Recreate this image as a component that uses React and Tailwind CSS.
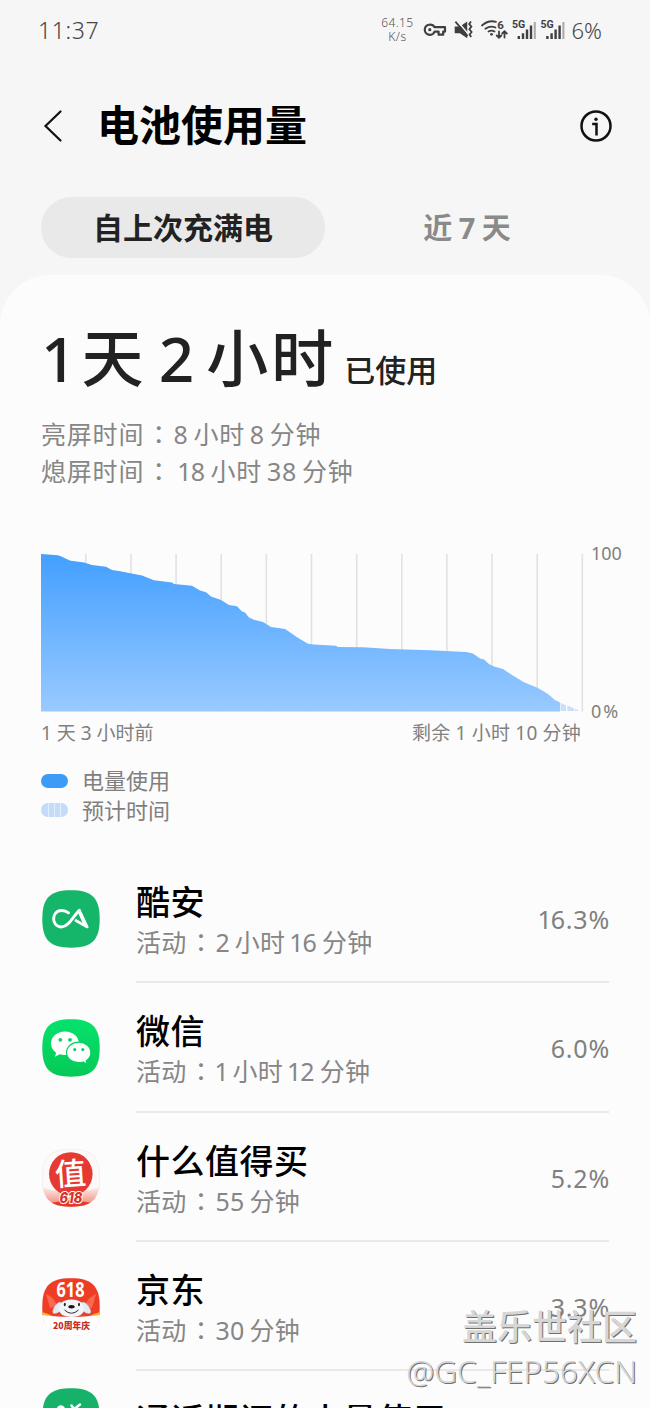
import React from "react";

const GRID_LINES = [85.8, 131, 176.1, 221.2, 266.3, 311.5, 356.7, 401.8, 446.9, 492, 537.2, 582.3];

const USAGE_PATH =
  "M41 554 L58 555.3 C64 557 66 559.5 71 560.7 L84 562.5 L92 565 L106 566.8 L112 570 L120 571.2 L142 575.5 L154 580.3 L172 582.4 L174 584 L192 585.8 L200 590.5 L206 592.3 L211 596.5 L221 600 L229 605 L237 606.3 L242 611.5 L245 612.5 L249 617.5 L254 619.8 L263 622 L271 627 L285 629 L291 633 L297 637.3 L308 643.7 L314 644.6 L336 645.8 L338 647 L363 647.2 L390 648.9 L430 650.3 L466 652 L473 653.5 L480 658.5 L484 659.5 L489 664 L494 666.5 L503 669 L512 675 L524 682.3 L538 688 L548 694 L555 700 L560 702.5 V711.5 H41 Z";

// Narrow "1" and a centred full-width colon inside running text
const Mixed = ({ children }) =>
  children.split(/(1|：)/).map((part, i) => {
    if (part === "1") {
      return <span key={i} className="-ml-px tracking-[-1px]">1</span>;
    }
    if (part === "：") {
      return <span key={i} className="ml-[2px] mr-[1.5px] font-['Noto_Sans_CJK_TC',sans-serif]">：</span>;
    }
    return <span key={i}>{part}</span>;
  });

const Chart = () => (
  <svg width="544" height="160" viewBox="41 552 544 160" className="block">
    <defs>
      <linearGradient id="usage" x1="0" y1="554" x2="0" y2="711" gradientUnits="userSpaceOnUse">
        <stop offset="0" stopColor="#439fff" />
        <stop offset="1" stopColor="#99caff" />
      </linearGradient>
    </defs>
    {GRID_LINES.map((x) => (
      <path key={x} d={`M${x} 554 V711.5`} stroke="#e2e2e2" strokeWidth="1.6" />
    ))}
    <path d={USAGE_PATH} fill="url(#usage)" />
    <path d="M560.5 702.7 L566 705.2 V711 H560.5Z M567.3 705.6 L574 708.4 V711 H567.3Z M575 708.8 L579.5 711 H575Z" fill="#c8e0fb" />
  </svg>
);

const StatusIcons = () => (
  <svg width="145" height="26" viewBox="423 17 145 26" className="block">
    {/* vpn key */}
    <path
      d="M429.8 24.6a5.1 5.1 0 1 0 4.8 7h4v3.1h4.6v-3.1h1.8v-4.4h-10.4a5.1 5.1 0 0 0-4.8-2.6Z"
      fill="none"
      stroke="#3f3f3f"
      strokeWidth="2.2"
      strokeLinejoin="round"
    />
    <circle cx="429.8" cy="29.7" r="1.6" fill="#3f3f3f" />
    {/* muted, vibrate */}
    <path d="M454.7 26.6h5.2l7.3-5v16.6l-7.3-5h-5.2Z" fill="#3f3f3f" />
    <path d="M456.4 20 L469 35" stroke="#f6f6f6" strokeWidth="1.6" />
    <path d="M455.4 21.6 L467.6 36" stroke="#3f3f3f" strokeWidth="1.8" />
    <path d="M471 21.5l-1.8 2.5 2.2 2.6-2 2.6 2.2 2.8-2 2.5 1.6 2.5" fill="none" stroke="#3f3f3f" strokeWidth="1.8" />
    {/* wifi 6 */}
    <g fill="none" stroke="#3f3f3f" strokeWidth="1.8" strokeLinecap="round">
      <path d="M482 25.5q6.5-5.800 14-3.700" />
      <path d="M485.400 28.800q5-3.600 10-1.300" />
      <path d="M488.500 31.600q3.200-2 6 0" />
      <path d="M499 31.500v6.200m-2.300-2.200 2.300 2.300 2.300-2.300M504.500 37.500v-6.200m-2.300 2.200 2.300-2.300 2.300 2.300" />
    </g>
    <circle cx="491.5" cy="34.3" r="1.4" fill="#3f3f3f" />
    <g fill="#3f3f3f" fontFamily="Roboto, sans-serif" fontWeight="700">
      <text x="497.2" y="28.7" fontSize="11.5">6</text>
      <text x="512" y="27.6" fontSize="10.5">5G</text>
      <text x="540.6" y="27.6" fontSize="10.5">5G</text>
    </g>
    {[0, 28.6].map((dx) => (
      <g key={dx} transform={`translate(${dx} 0)`}>
        <path d="M518.800 36v3M523 33.300v5.700M527 29.500v9.500M531 25.500v13.500" stroke="#3f3f3f" strokeWidth="2.400" />
        <path d="M534.800 22v17" stroke="#a9a9a9" strokeWidth="2" />
      </g>
    ))}
  </svg>
);

// Rounded "squircle" used by every launcher icon
const SHAPE = "M29 .3C50 .3 57.700 8 57.700 29S50 57.700 29 57.700 .3 50 .3 29 8 .3 29 .3Z";

const CoolapkIcon = () => (
  <svg width="58" height="58" viewBox="0 0 58 58">
    <path d={SHAPE} fill="#15b56a" />
    <g fill="none" stroke="#fff" strokeLinecap="round" strokeLinejoin="round">
      <path d="M26.500 22.800C24.500 21.200 22 20.500 19.500 20.500c-10.500 0-10.500 16.500 0 16.500C27 37 31 26 37.300 20.300" strokeWidth="2.900" />
      <path d="M37.300 20.300L45.300 37L33.800 30.500" strokeWidth="2.600" />
      <path d="M38 23l4.500 10" strokeWidth="3.400" />
    </g>
  </svg>
);

const WechatIcon = () => (
  <svg width="58" height="58" viewBox="0 0 58 58">
    <defs>
      <linearGradient id="wechat" x1="0" y1="0" x2="0" y2="1">
        <stop offset="0" stopColor="#05e26c" />
        <stop offset="1" stopColor="#06c957" />
      </linearGradient>
    </defs>
    <path d={SHAPE} fill="url(#wechat)" />
    <path d="M23 12.500c-8 0-14 5.400-14 12 0 3.800 2 7 5.100 9.200l-1.200 4 4.800-2.500c1.700.5 3.400.8 5.300.8 8 0 14-5 14-11.500s-6-12-14-12Z" fill="#fff" />
    <path d="M36.800 23.200c-6.900 0-12.300 4.500-12.300 10.300s5.400 10.200 12.300 10.200c1.500 0 3-.2 4.400-.7l4 2.200-1-3.500c2.900-1.900 4.700-4.800 4.700-8.200 0-5.800-5.300-10.300-12.100-10.300Z" fill="#fff" stroke="#05d260" strokeWidth="1.200" />
    <g fill="#05d762">
      <circle cx="18.300" cy="20.800" r="1.900" />
      <circle cx="28" cy="20.800" r="1.900" />
      <circle cx="32.700" cy="30.600" r="1.600" />
      <circle cx="40.800" cy="30.600" r="1.600" />
    </g>
  </svg>
);

const SmzdmIcon = () => (
  <svg width="58" height="58" viewBox="0 0 58 58">
    <defs>
      <clipPath id="smzdmShape">
        <path d={SHAPE} />
      </clipPath>
      <linearGradient id="smzdmFloor" x1="0" y1="0" x2="0" y2="1">
        <stop offset="0" stopColor="#fdeeeb" />
        <stop offset="1" stopColor="#f0806d" />
      </linearGradient>
    </defs>
    <path d={SHAPE} fill="#fdf9f9" stroke="#ececec" strokeWidth=".7" />
    <g clipPath="url(#smzdmShape)">
      <path d="M0 38q14 5 29 6 15-1 29-6v20H0Z" fill="url(#smzdmFloor)" />
      <circle cx="28.800" cy="25" r="21.800" fill="#e53a31" />
      <path d="M8 54q21-5 42 0v6H8Z" fill="#e6392c" />
    </g>
    <text x="28.500" y="36" fontSize="31" fontWeight="500" fill="#fff" textAnchor="middle" transform="rotate(-4 29 25)" fontFamily="'Noto Sans CJK SC', sans-serif">值</text>
    <text x="29" y="53.500" fontSize="15" fontWeight="800" fontStyle="italic" fill="#d8302b" stroke="#fff" strokeWidth="2" paintOrder="stroke" textAnchor="middle" textLength="23" lengthAdjust="spacingAndGlyphs" fontFamily="Inter, sans-serif">618</text>
  </svg>
);

const JdIcon = () => (
  <svg width="58" height="58" viewBox="0 0 58 58">
    <defs>
      <clipPath id="jdShape">
        <path d={SHAPE} />
      </clipPath>
    </defs>
    <path d={SHAPE} fill="#fff" stroke="#e6e6e6" strokeWidth=".7" />
    <g clipPath="url(#jdShape)">
      <path d="M0 0h58v37q-29 6-58 0Z" fill="#ef3d25" />
      <path d="M4 16q8 3 11 12l-7 2ZM54 16q-8 3-11 12l7 2Z" fill="#fb6a50" />
      <path d="M0 34q8 2 14 5.500H0ZM58 34q-8 2-14 5.500h14Z" fill="#ffb12e" />
      <path d="M0 37q10 1.500 29 2 19-.5 29-2v21H0Z" fill="#fff" />
    </g>
    <path d="M19 24q-5 0-8 8-1 4 2 3.500 3-.3 6-3ZM40 24q5 0 8.500 8 1 4-2 3.500-3-.3-6.500-3Z" fill="#e6eaf2" stroke="#b8bdca" strokeWidth=".5" />
    <path d="M29.500 21.500c-8 0-12.500 3.500-12.500 9.500 0 5 5 8 12.500 8S42 36 42 31c0-6-4.500-9.500-12.500-9.500Z" fill="#f3f5fa" />
    <path d="M22.500 32q7 6.500 14 0" fill="none" stroke="#333" strokeWidth="1" />
    <ellipse cx="29.500" cy="28.700" rx="3.200" ry="1.700" fill="#161616" />
    <ellipse cx="22.800" cy="26.500" rx="1" ry="1.700" fill="#222" />
    <ellipse cx="37" cy="26.500" rx="1" ry="1.700" fill="#222" />
    <text x="28.500" y="19" fontSize="22" fontWeight="700" fill="#fff" textAnchor="middle" textLength="28" lengthAdjust="spacingAndGlyphs" fontFamily="'Noto Sans', sans-serif">618</text>
    <text x="29.500" y="50.800" fontSize="9" fontWeight="900" fill="#c92a22" textAnchor="middle" textLength="37" lengthAdjust="spacingAndGlyphs" fontFamily="'Noto Sans CJK SC', sans-serif">20周年庆</text>
  </svg>
);

const CallIcon = () => (
  <svg width="58" height="58" viewBox="0 0 58 58">
    <path d={SHAPE} fill="#17b26a" />
    <path d="M16.500 19.500q3-2 5 .5M31 22l7-5.500M29.500 17.500l2 3" fill="none" stroke="#fff" strokeWidth="2.500" strokeLinecap="round" />
  </svg>
);

const APPS = [
  { name: "酷安", time: "活动：2 小时 16 分钟", percent: "16.3%", Icon: CoolapkIcon },
  { name: "微信", time: "活动：1 小时 12 分钟", percent: "6.0%", Icon: WechatIcon },
  { name: "什么值得买", time: "活动：55 分钟", percent: "5.2%", Icon: SmzdmIcon },
  { name: "京东", time: "活动：30 分钟", percent: "3.3%", Icon: JdIcon },
];

const AppRow = ({ name, time, percent, Icon }) => (
  <div className="flex h-[129.3px] shrink-0 pl-[42px] pr-[41px]">
    <div className="w-[94px] shrink-0 pt-[36px]">
      <Icon />
    </div>
    <div className="flex grow border-b-2 border-[#e9e9e9]">
      <div className="grow pt-[27px]">
        <div className="h-[42px] text-[34px] leading-[42px] font-medium tracking-[0.5px] text-black">{name}</div>
        <div className="h-[36px] text-[25px] leading-[36px] tracking-[0.3px] text-[#868686] [word-spacing:-2px]">
          <Mixed>{time}</Mixed>
        </div>
      </div>
      <div className="-mr-px pt-[47px] text-[25px] leading-[36px] tracking-[0.8px] text-[#808080]">
        <Mixed>{percent}</Mixed>
      </div>
    </div>
  </div>
);

const App = () => {
  return (
    <div className="relative flex h-[1408px] w-[650px] flex-col overflow-hidden bg-[#f6f6f6] font-['Noto_Sans','Noto_Sans_CJK_SC',sans-serif] whitespace-nowrap">
      {/* Status bar */}
      <div className="flex h-[60px] shrink-0 items-center pl-[38px] pr-[48px] text-[#444]">
        <span className="text-[23px] font-light tracking-[0.6px]">11:37</span>
        <div className="ml-auto mr-[9px] text-center text-[12px] leading-[14px] font-light tracking-[0.4px] text-[#555]">
          <div>64.15</div>
          <div>K/s</div>
        </div>
        <StatusIcons />
        <span className="ml-[4px] text-[22px] font-light">6%</span>
      </div>

      {/* Title */}
      <div className="flex h-[132px] shrink-0 items-center pl-[43px] pr-[37px]">
        <svg width="20" height="34" viewBox="0 0 20 34" fill="none" stroke="#111" strokeWidth="2.200" strokeLinecap="round">
          <path d="M17.500 2.500L2.500 17L17.500 31.500" />
        </svg>
        <h1 className="-mt-[3px] ml-[34px] text-[42px] font-bold text-black">电池使用量</h1>
        <svg width="34" height="34" viewBox="0 0 34 34" fill="none" stroke="#111" className="ml-auto">
          <circle cx="17" cy="17" r="14.500" strokeWidth="2.500" />
          <path d="M13.200 15h4.300v11.500" strokeWidth="2.500" />
          <circle cx="17" cy="10.200" r="1.700" fill="#111" stroke="none" />
        </svg>
      </div>

      {/* Tabs */}
      <div className="mt-[5px] flex h-[61px] shrink-0 px-[41px] text-[30px]">
        <button className="w-[284px] rounded-full bg-[#e9e9e9] pb-px font-bold text-[#222]">自上次充满电</button>
        <button className="w-[284px] text-[29px] font-bold text-[#8a8a8a] [word-spacing:-1px]">近 7 天</button>
      </div>

      {/* Content card */}
      <div className="mt-[17px] flex grow flex-col rounded-t-[50px] bg-[#fcfcfc]">
        <div className="flex h-[140px] shrink-0 items-baseline pl-[41px] pt-[38px] text-[#222]">
          <span className="text-[62px] leading-[90px] font-medium">
            1<span className="ml-[-11px]"> 天</span>
            <span className="ml-[-1px]"> 2</span>
            <span className="ml-[-7px] tracking-[3px]"> 小时</span>
          </span>
          <span className="ml-[8px] text-[31px] font-medium">已使用</span>
        </div>
        <div className="h-[137px] shrink-0 pl-[41px] text-[25px] leading-[36px] tracking-[0.8px] text-[#868686] [word-spacing:-2.500px]">
          <div>
            <Mixed>亮屏时间：8 小时 8 分钟</Mixed>
          </div>
          <div>
            <Mixed>熄屏时间： 18 小时 38 分钟</Mixed>
          </div>
        </div>

        <div className="flex h-[160px] shrink-0 pl-[41px]">
          <Chart />
          <div className="-my-[12px] ml-[6px] flex flex-col justify-between text-[18px] leading-[26px] text-[#808080]">
            <span>100</span>
            <span className="tracking-[2px]">0%</span>
          </div>
        </div>
        <div className="flex h-[55px] shrink-0 justify-between pl-[41px] pr-[69px] pt-[7px] text-[19px] leading-[28px] text-[#808080]">
          <span>1 天 3 小时前</span>
          <span className="tracking-[0.2px]">剩余 1 小时 10 分钟</span>
        </div>
        <div className="h-[87px] shrink-0 pl-[41px] text-[22px] leading-[30px] text-[#808080]">
          <div className="flex items-center">
            <span className="mr-[14px] h-[14px] w-[27px] rounded-full bg-[#3d9bf8]" />
            <span className="-mt-[2px]">电量使用</span>
          </div>
          <div className="flex items-center">
            <span className="mr-[14px] flex h-[14px] w-[27px] gap-px overflow-hidden rounded-full bg-[#e2effd]">
              <span className="w-[7px] bg-[#c5dcf9]" />
              <span className="w-[5px] bg-[#c5dcf9]" />
              <span className="w-[5px] bg-[#c5dcf9]" />
              <span className="w-[7px] bg-[#c5dcf9]" />
            </span>
            <span>预计时间</span>
          </div>
        </div>

        {APPS.map((app) => (
          <AppRow key={app.name} {...app} />
        ))}

        {/* Last entry runs past the bottom edge */}
        <div className="flex h-[37px] shrink-0 overflow-hidden pl-[42px] pt-[17px]">
          <div className="w-[94px] shrink-0">
            <CallIcon />
          </div>
          <div className="pt-[11px] text-[34px] leading-[42px] font-medium tracking-[0.5px] text-black">通话期间的电量使用</div>
        </div>
      </div>

      {/* Watermark */}
      <div className="absolute right-[13px] bottom-[15px] text-right text-[#d6d6d6] [text-shadow:1px_1px_0_#6f6f6f]">
        <div className="text-[35px] leading-[45px] font-medium">盖乐世社区</div>
        <div className="text-[31.5px] leading-[44px] font-light">@GC_FEP56XCN</div>
      </div>
    </div>
  );
};

export default App;
